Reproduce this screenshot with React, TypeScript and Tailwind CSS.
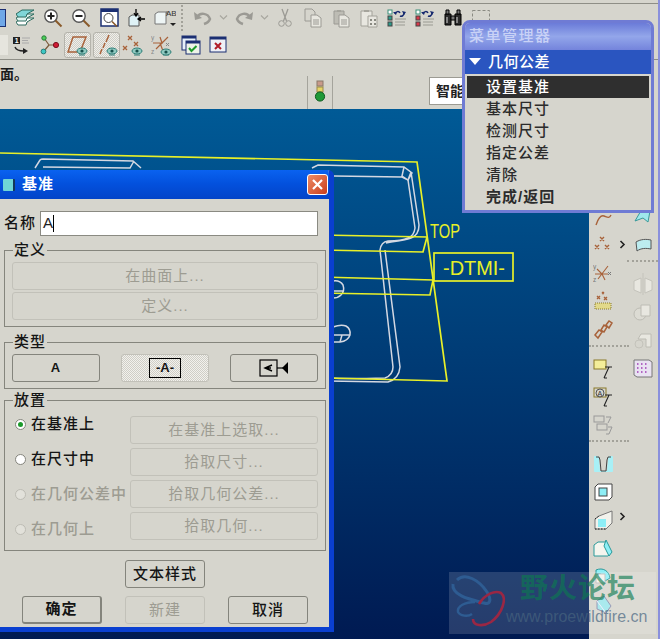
import type { ReactNode } from "react";

const S = ({ children, w = 20, h = 20 }: { children: ReactNode; w?: number; h?: number }) => (
  <svg width={w} height={h} viewBox={`0 0 ${w} ${h}`} fill="none" className="shrink-0">
    {children}
  </svg>
);

const brown = "#a8623a";
const teal = "#2f7f78";

const Eye = ({ x = 12, y = 15 }: { x?: number; y?: number }) => (
  <g>
    <ellipse cx={x} cy={y} rx="5" ry="3" fill="#8fc9c0" stroke={teal} />
    <circle cx={x} cy={y} r="1.6" fill="#15504c" />
    <path d={`M${x - 3} ${y + 4}h6`} stroke={teal} />
  </g>
);

const Layers = () => (
  <S>
    <path d="M1 14l7-4h11l-7 4-1 3H3z" fill="#fff" stroke="#2c6a5e" />
    <path d="M1 10l7-4h11l-7 4-1 3H3z" fill="#dff3ef" stroke="#2c6a5e" />
    <path d="M1 6l6-4h12l-7 4-1 3H3z" fill="#7fd6d8" stroke="#2c6a5e" />
  </S>
);
const Zoom = ({ plus }: { plus?: boolean }) => (
  <S>
    <circle cx="8" cy="8" r="6.2" fill="#fff" stroke="#555" strokeWidth="1.4" />
    <path d="M4.5 8h7" stroke="#222" strokeWidth="2" />
    {plus && <path d="M8 4.5v7" stroke="#222" strokeWidth="2" />}
    <path d="M12.5 12.5l6 6" stroke="#8a5a2a" strokeWidth="2" />
  </S>
);
const ZoomBox = () => (
  <S w={19} h={20}>
    <rect x="1" y="1" width="17" height="17" fill="#fff" stroke="#1b2f72" strokeWidth="1.5" />
    <rect x="1" y="1" width="17" height="3" fill="#1b2f72" />
    <circle cx="8.5" cy="10" r="4.5" stroke="#444" />
    <path d="M12 13.5l5 5" stroke="#8a5a2a" strokeWidth="1.6" />
  </S>
);
const Orient = () => (
  <S>
    <path d="M2 9l3-2h7v11H2z" fill="#dff2f6" stroke="#555" />
    <path d="M9 1v6M7 5l2 3 2-3M18 11h-7M14 9l-3 2 3 2" stroke="#000" strokeWidth="1.3" />
  </S>
);
const NamedView = () => (
  <S w={22} h={20}>
    <path d="M1 6l3-2h8v12H1z" fill="#eef5f5" stroke="#777" />
    <path d="M13 3v3" stroke="#555" />
    <text x="12" y="8" fontSize="8" fill="#333" fontFamily="Liberation Sans">AB</text>
    <path d="M16 15h6l-3 3z" fill="#222" />
  </S>
);
const Undo = ({ flip }: { flip?: boolean }) => (
  <S>
    <g transform={flip ? "matrix(-1 0 0 1 20 0)" : undefined}>
      <path d="M4 9c3-5 11-4 13 2-1 3-3 4-6 5" stroke="#9b9a94" strokeWidth="2.4" />
      <path d="M1 4l1 8 7-2z" fill="#9b9a94" />
    </g>
  </S>
);
const Chev = ({ dark }: { dark?: boolean }) =>
  dark ? (
    <svg width="7" height="9" viewBox="0 0 7 9" fill="none"><path d="M1.5 1l3.5 3.5L1.5 8" stroke="#222" strokeWidth="1.6" /></svg>
  ) : (
    <svg width="9" height="7" viewBox="0 0 9 7" fill="none"><path d="M1 1.5l3.5 3.5L8 1.5" stroke="#a8a79f" strokeWidth="1.2" /></svg>
  );
const Scissors = () => (
  <S w={14} h={20}>
    <path d="M4 1l4.5 12M10 1L5.5 13" stroke="#9b9a94" strokeWidth="1.3" />
    <circle cx="3.5" cy="15.5" r="2.8" stroke="#9b9a94" />
    <circle cx="10.5" cy="15.5" r="2.8" stroke="#9b9a94" />
  </S>
);
const Copy = ({ clip }: { clip?: boolean }) => (
  <S w={18} h={20}>
    {clip ? (
      <path d="M2 3h10v13H2z" fill="#bdbcb4" stroke="#9b9a94" />
    ) : (
      <path d="M1 1h7l3 3v9H1z" fill="#d6d5cd" stroke="#9b9a94" />
    )}
    {clip && <path d="M5 2h4v2H5z" fill="#a5a49c" />}
    <path d="M7 7h6l4 3v9H7z" fill="#e8e7e0" stroke="#9b9a94" />
    <path d="M9 12h6M9 14h6M9 16h6" stroke="#9b9a94" />
  </S>
);
const PasteSpecial = () => (
  <S w={18} h={20}>
    <path d="M1 3h11v15H1z" fill="#e8e7e0" stroke="#a3a29a" />
    <path d="M4 2h5v2H4z" fill="#a5a49c" />
    <path d="M8 8h9v11H8z" fill="#e8e7e0" stroke="#a3a29a" />
    <path d="M10 11h2v2h-2zM14 11h2v2h-2zM10 15h2v2h-2zM14 15h2v2h-2z" fill="#8a8a82" />
  </S>
);
const Regen = ({ red }: { red?: boolean }) => (
  <S>
    <rect x="1" y="2" width="4" height="4" fill="#fff" stroke="#3b8f7a" />
    <rect x="1" y="8" width="4" height="4" fill={red ? "#d8384a" : "#2c9a8a"} stroke="#444" />
    <rect x="1" y="14" width="4" height="4" fill={red ? "#d8384a" : "#2c9a8a"} stroke="#444" />
    <path d="M8 6c1-3 4-3 5-1M17 5c0 2-2 4-4 3" stroke="#15286e" strokeWidth="1.5" />
    <path d="M6 4l3 3 1-3zM15 3l4 1-2 3z" fill="#15286e" />
    <path d="M8 11h11M8 14h10M8 17h10" stroke="#9a9a92" />
  </S>
);
const Binoculars = () => (
  <S>
    <path d="M2 6h6v11H2zM12 6h6v11h-6z" fill="#2b2b2b" stroke="#000" />
    <path d="M3 2h3v4H3zM14 2h3v4h-3zM8 8h4v4H8z" fill="#777" stroke="#000" />
    <path d="M4 9v6M14 9v6" stroke="#ddd" />
  </S>
);
const Dashed = () => (
  <S>
    <rect x="1.5" y="2.5" width="17" height="16" stroke="#8a8a82" strokeDasharray="3 2" />
  </S>
);

const NoteOne = () => (
  <S>
    <rect x="1" y="2" width="7" height="7" fill="#222" />
    <text x="2.8" y="8" fontSize="7" fill="#fff" fontFamily="Liberation Sans" fontWeight="700">1</text>
    <path d="M10 3h8M10 5.5h6M10 8h7" stroke="#aaa" />
    <path d="M3 12c1 3 4 4 9 4" stroke="#222" strokeWidth="1.4" />
    <path d="M11 13l5 3-5 3z" fill="#222" />
  </S>
);
const Nodes = () => (
  <S>
    <path d="M4 3l5 7h7M9 10l-5 6" stroke="#7a5a3a" strokeWidth="1.2" />
    <circle cx="4" cy="3" r="2.2" fill="#4cd05a" stroke="#2a7a3a" />
    <circle cx="16" cy="10" r="2.6" fill="#d01c34" stroke="#7a1020" />
    <circle cx="3.5" cy="16.5" r="2.4" fill="#3cc8c4" stroke="#2a7a78" />
  </S>
);
const PlaneEye = () => (
  <S w={22} h={22}>
    <path d="M6 3h13l-6 15H1z" stroke={brown} strokeWidth="1.5" />
    <Eye x={15} y={17} />
  </S>
);
const AxisEye = () => (
  <S w={22} h={22}>
    <path d="M13 1l-3 7M9 9l-2 5M6 15l-2 5" stroke={brown} strokeWidth="1.5" />
    <Eye x={16} y={17} />
  </S>
);
const PointsEye = () => (
  <S w={22} h={22}>
    <path d="M6 2l4 4M10 2L6 6M12 8l4 4M16 8l-4 4M1 12l4 4M5 12l-4 4" stroke={brown} strokeWidth="1.3" />
    <Eye x={15} y={17} />
  </S>
);
const CsysEye = () => (
  <S w={22} h={22}>
    <path d="M9 3l2 6M17 3L5 15M2 9h10M9 9l3 8" stroke={brown} strokeWidth="1.2" />
    <text x="0" y="6" fontSize="6.5" fill="#888" fontFamily="Liberation Sans">y</text>
    <text x="0" y="20" fontSize="6.5" fill="#888" fontFamily="Liberation Sans">z</text>
    <path d="M15 9l3 3M18 9l-3 3" stroke="#888" />
    <Eye x={15} y={18} />
  </S>
);
const WinCheck = () => (
  <S w={20} h={20}>
    <rect x="1" y="1" width="14" height="14" fill="#e7f0f8" stroke="#1b2f72" />
    <rect x="1" y="1" width="14" height="2.5" fill="#1b2f72" />
    <rect x="5" y="6" width="14" height="13" fill="#eef3e8" stroke="#1b2f72" />
    <rect x="5" y="6" width="14" height="2.5" fill="#1b2f72" />
    <path d="M8 13l2.5 3 5-5" stroke="#1d9a2c" strokeWidth="2" />
  </S>
);
const WinClose = () => (
  <S w={18} h={18}>
    <rect x="1" y="1" width="16" height="15" fill="#eef0f6" stroke="#1b2f72" />
    <rect x="1" y="1" width="16" height="2.5" fill="#1b2f72" />
    <path d="M6 7l6 6M12 7l-6 6" stroke="#b01c28" strokeWidth="2" />
  </S>
);

/* right column */
const CurveTop = () => (
  <S>
    <path d="M3 18c2-6 5-10 8-9s5 3 7-1" stroke={brown} strokeWidth="1.4" />
  </S>
);
const PointSet = () => (
  <S>
    <path d="M7 2l4 4M11 2L7 6M2 10l4 4M6 10l-4 4M12 10l4 4M16 10l-4 4" stroke={brown} strokeWidth="1.4" />
  </S>
);
const Csys = () => (
  <S>
    <path d="M4 6l5 5M15 3L5 16M2 11h13M9 11l3 6" stroke={brown} strokeWidth="1.1" />
    <text x="0" y="6" fontSize="6.5" fill="#777" fontFamily="Liberation Sans">y</text>
    <text x="0" y="19" fontSize="6.5" fill="#777" fontFamily="Liberation Sans">z</text>
    <path d="M15 9l3 3M18 9l-3 3" stroke="#777" />
  </S>
);
const PointHatch = () => (
  <S>
    <path d="M9 1l2 2M11 1L9 3M4 5l3 3M7 5L4 8M11 6l3 3M14 6l-3 3" stroke={brown} strokeWidth="1.3" />
    <rect x="2" y="12" width="16" height="6" fill="#e2d98a" stroke="#8a7a2a" strokeDasharray="1 1" />
  </S>
);
const Chain = () => (
  <S w={21} h={21}>
    <path d="M2 16l4-5 3 2-4 6zM8 11l3-5 3 2-3 5zM13 6l3-4 3 2-3 5z" stroke={brown} strokeWidth="1.5" />
  </S>
);
const NoteBox = ({ sym }: { sym?: boolean }) => (
  <S>
    <rect x="1" y="1" width="12" height="9" fill={sym ? "#d6d5cd" : "#f4ee9a"} stroke="#8a7a2a" />
    {sym && <circle cx="7" cy="6" r="4" stroke="#555" />}
    {sym && <text x="4.6" y="8.6" fontSize="7" fill="#333" fontFamily="Liberation Sans">A</text>}
    <path d="M11 19l5-11h-4M16 8h3M14 19h-3" stroke="#222" strokeWidth="1.1" />
  </S>
);
const NoteGhost = () => (
  <S>
    <rect x="1" y="1" width="10" height="6" stroke="#999" />
    <rect x="4" y="9" width="10" height="6" stroke="#999" />
    <path d="M13 2h5l-3 6M15 12h4l-3 7h-3" stroke="#999" />
  </S>
);
const SurfTop = () => (
  <S>
    <path d="M2 14l7-12 8 2-2 11-5-4z" fill="#9fe8ec" stroke="#3a9a9a" />
  </S>
);
const Surf = () => (
  <S w={18} h={16}>
    <path d="M2 5c5-3 10-3 15-2v9c-5-1-10-1-14 2z" fill="#bcecef" stroke="#555" />
  </S>
);
const Mirror = () => (
  <S w={22} h={22}>
    <path d="M11 0v22" stroke="#c4c3bb" />
    <path d="M9 5L2 8v9l7 3zM13 5l7 3v9l-7 3z" fill="#e8e7e0" stroke="#c4c3bb" />
  </S>
);
const Merge = () => (
  <S>
    <circle cx="7" cy="12" r="6" fill="#dcdbd3" stroke="#bdbcb4" />
    <path d="M8 3h9v11H8z" fill="#e8e7e0" stroke="#bdbcb4" />
  </S>
);
const Trim = () => (
  <S>
    <path d="M8 4h10v13h-5V9H5z" fill="#e8e7e0" stroke="#bdbcb4" />
    <circle cx="6" cy="14" r="4" stroke="#c4c3bb" />
  </S>
);
const Grid = () => (
  <S>
    <path d="M1 2h15l3 2v15H4l-3-2z" fill="#e9e2f2" stroke="#777" />
    <path d="M4 6h1.5M8 6h1.5M12 6h1.5M4 10h1.5M8 10h1.5M12 10h1.5M4 14h1.5M8 14h1.5M12 14h1.5" stroke="#a03cb4" strokeWidth="1.6" />
  </S>
);
const Slot = () => (
  <S w={19} h={18}>
    <rect x="0" y="1" width="19" height="16" rx="1" fill="#a8f0f6" />
    <path d="M4 1l1 3 1 12h7l1-12 1-3z" fill="#d6d5cd" />
    <path d="M2 2h3l1 3 1 11h5l1-11 1-3h3" stroke="#444" />
  </S>
);
const Shell = () => (
  <S w={19} h={18}>
    <path d="M1 4l3-3h14v13l-3 3H1z" fill="#fff" stroke="#444" />
    <rect x="5" y="5" width="8" height="8" fill="#8deef6" stroke="#444" />
  </S>
);
const Rib = () => (
  <S w={22} h={20}>
    <path d="M7 6l13-5v12l-6 6H3V9z" fill="#f2f2ec" stroke="#777" />
    <rect x="6" y="9" width="8" height="8" fill="#8deef6" />
    <path d="M3 9l4-3M3 19h11" stroke="#222" strokeDasharray="1.5 1.5" />
  </S>
);
const Draft = () => (
  <S w={20} h={20}>
    <path d="M1 7l4-3h8l5 11-3 3H1z" fill="#f5f5ee" stroke="#2a9a9a" />
    <path d="M13 2l6 12-3 4-5-10z" fill="#8deef6" stroke="#2a9a9a" />
  </S>
);
const Round = () => (
  <S w={20} h={20}>
    <path d="M3 4c7-3 13 1 14 8l-5 3C11 9 8 7 3 8z" fill="#8deef6" stroke="#2a9a9a" />
    <path d="M3 8h9v9H3z" fill="#f2f2ec" stroke="#bbb" />
  </S>
);
const Chamfer = () => (
  <S w={20} h={20}>
    <path d="M4 7l7-5 7 10-5 7-9-4z" fill="#9ae5ea" stroke="#88a" />
    <path d="M4 7l9 12" stroke="#eef" />
  </S>
);

const Dots = ({ className = "" }: { className?: string }) => (
  <div className={`border-t-2 border-dotted border-[#a3a29a] ${className}`} />
);

const Tool = ({ w = "w-7", children, pressed }: { w?: string; children?: ReactNode; pressed?: boolean }) => (
  <div
    className={`flex h-[26px] shrink-0 items-center justify-center overflow-hidden ${w} ${
      pressed
        ? "rounded-[3px] border border-[#b5b4ac] bg-[repeating-conic-gradient(#cfcec6_0_25%,#efeeea_0_50%)] bg-[length:2px_2px]"
        : ""
    }`}
  >
    {children}
  </div>
);

const Cell = ({ children }: { children?: ReactNode }) => (
  <div className="flex h-7 items-center justify-center">{children}</div>
);

const DialogButton = ({
  children,
  disabled,
  className = "",
  pressed,
}: {
  children: ReactNode;
  disabled?: boolean;
  className?: string;
  pressed?: boolean;
}) => (
  <div
    className={`flex h-7 items-center justify-center rounded-[3px] border text-[15px] tracking-[1px] ${
      disabled ? "border-[#c2c1b9] text-[#9d9c92]" : "border-[#84847c] text-[#151515]"
    } ${
      pressed
        ? "border-[#c2c1b9] bg-[repeating-conic-gradient(#cfcec6_0_25%,#f2f1ed_0_50%)] bg-[length:2px_2px]"
        : ""
    } ${className}`}
  >
    {children}
  </div>
);

const Group = ({ title, className, children }: { title: string; className: string; children: ReactNode }) => (
  <div className={`relative border border-[#85857d] ${className}`}>
    <span className="absolute left-[8px] top-[-11px] bg-[#d6d5cd] px-[1px] text-[15px] font-medium leading-[20px] tracking-[1px] text-[#151515]">
      {title}
    </span>
    {children}
  </div>
);

const placements = [
  { label: "在基准上", button: "在基准上选取...", pad: "pb-[12px]", checked: true },
  { label: "在尺寸中", button: "拾取尺寸...", pad: "pb-[6px]" },
  { label: "在几何公差中", button: "拾取几何公差...", pad: "", disabled: true },
  { label: "在几何上", button: "拾取几何...", pad: "pt-[6px]", disabled: true },
];

const Dialog = () => (
  <div className="absolute left-0 top-[170px] h-[462px] w-[334px] overflow-hidden rounded-tr-md border-b-[5px] border-r-[5px] border-[#0a3fd0] bg-[#d6d5cd]">
    <div className="flex h-[29px] items-center bg-gradient-to-b from-[#0a62f0] via-[#0350dc] to-[#0344c8] pl-[3px] pr-[1px]">
      <span className="h-[12px] w-[12px] rounded-[1px] border-r-2 border-[#13385a] bg-[#6fd6d6]" />
      <span className="ml-[7px] text-[15px] font-bold tracking-[1px] text-white">基准</span>
      <div className="ml-auto flex h-[21px] w-[21px] items-center justify-center rounded-[3px] border border-white bg-gradient-to-br from-[#ec8a64] to-[#c93c18]">
        <svg width="13" height="13" viewBox="0 0 13 13"><path d="M2 2l9 9M11 2l-9 9" stroke="#fff" strokeWidth="2.2" /></svg>
      </div>
    </div>
    <div className="pl-1 pr-[3px]">
      <div className="mt-[12px] flex h-[25px] items-center">
        <span className="w-[36px] text-[15px] font-medium tracking-[1px] text-[#151515]">名称</span>
        <div className="flex h-[25px] w-[278px] items-center border border-[#8a8a82] bg-white pl-[2px] font-['Liberation_Sans',sans-serif] text-[15px] text-[#222]">
          A<span className="h-[17px] w-[1px] bg-black" />
        </div>
      </div>

      <Group title="定义" className="mt-[14px] flex flex-col gap-[2px] px-[7px] pb-[6px] pt-[11px]">
        <DialogButton disabled>在曲面上...</DialogButton>
        <DialogButton disabled>定义...</DialogButton>
      </Group>

      <Group title="类型" className="mt-[15px] flex justify-between px-[7px] pb-[6px] pt-[11px]">
        <DialogButton className="w-[88px]">
          <span className="font-['Liberation_Sans',sans-serif] text-[13px] font-bold">A</span>
        </DialogButton>
        <DialogButton pressed className="w-[88px]">
          <span className="flex h-[20px] w-[32px] items-center justify-center border border-black font-['Liberation_Sans',sans-serif] text-[13px] font-bold tracking-[0px]">
            -A-
          </span>
        </DialogButton>
        <DialogButton className="w-[88px]">
          <svg width="30" height="18" viewBox="0 0 30 18" fill="none">
            <rect x="1" y="1" width="17" height="16" stroke="#000" strokeWidth="1.2" />
            <path d="M13 6L6 9l7 3M6 9h6" stroke="#000" strokeWidth="1.4" />
            <path d="M18 9h6" stroke="#000" strokeWidth="1.2" />
            <path d="M29 3v12l-6-6z" fill="#000" />
          </svg>
        </DialogButton>
      </Group>

      <Group title="放置" className="mt-[11px] flex flex-col gap-1 px-[7px] pb-[10px] pt-[15px]">
        {placements.map((p) => (
          <div key={p.label} className="flex">
            <div
              className={`flex h-7 w-[118px] items-center gap-[5px] pl-[3px] text-[15px] font-medium tracking-[1px] ${p.pad} ${
                p.disabled ? "text-[#9d9c92]" : "text-[#151515]"
              }`}
            >
              <span
                className={`flex h-[11px] w-[11px] shrink-0 items-center justify-center rounded-full border ${
                  p.disabled ? "border-[#bdbcb4] bg-[#e2e1da]" : "border-[#85857d] bg-white"
                }`}
              >
                {p.checked && <span className="h-[5px] w-[5px] rounded-full bg-[#1c9a2c]" />}
              </span>
              <span className="whitespace-nowrap">{p.label}</span>
            </div>
            <DialogButton disabled className="w-[188px]">
              {p.button}
            </DialogButton>
          </div>
        ))}
      </Group>

      <div className="mt-[9px] flex justify-center">
        <DialogButton className="w-[80px] font-medium">文本样式</DialogButton>
      </div>
      <div className="mt-[8px] flex gap-[23px] pl-[18px]">
        <DialogButton className="w-[80px] border-b-2 border-r-2 font-bold">确定</DialogButton>
        <DialogButton disabled className="w-[80px]">新建</DialogButton>
        <DialogButton className="w-[80px] font-medium">取消</DialogButton>
      </div>
    </div>
  </div>
);

const menuItems = ["基本尺寸", "检测尺寸", "指定公差", "清除", "完成/返回"];

const MenuManager = () => (
  <div className="absolute left-[462px] top-[20px] w-[192px] overflow-hidden rounded-t-lg border-[3px] border-[#6f7bd4] bg-[#d6d5cd]">
    <div className="flex h-[27px] items-center bg-gradient-to-b from-[#6b7bd8] via-[#93a6ea] to-[#7484dc] pl-[4px] text-[15px] font-medium tracking-[1.5px] text-[#c9d2f6]">
      菜单管理器
    </div>
    <div className="flex h-[24px] items-center gap-[7px] bg-[#2a55c0] pl-[4px] text-[15px] font-medium tracking-[0.5px] text-white">
      <svg width="12" height="8" viewBox="0 0 12 8"><path d="M0 0h12L6 7z" fill="#fff" /></svg>
      几何公差
    </div>
    <div className="p-[2px] text-[15px] font-medium tracking-[1px] text-[#2c2c2c]">
      <div className="flex h-[22px] items-center bg-[#2f2f2f] pl-[19px] text-white">设置基准</div>
      {menuItems.map((m) => (
        <div key={m} className={`flex h-[22px] items-center pl-[19px] ${m === "完成/返回" ? "font-bold" : ""}`}>
          {m}
        </div>
      ))}
    </div>
  </div>
);

const Model = () => (
  <svg className="absolute inset-0 h-full w-full" viewBox="0 109 589 530" fill="none">
    <g stroke="#d4d8e2" strokeWidth="1.5">
      <path d="M35 168l5-8q1-1 3-1l90 2 8 7M43 167l87 1 4-7" />
      <path d="M312 168l6-3 86 2 8 6-4 7-6-3-68-1M404 167l-2 9 6 4 3-8" />
      <path d="M411 172l8 53q0 10-8 13-5 2-20 4l-5 1M408 180l7 48q-1 8-7 10-6 3-20 3-7 1-8 9" />
      <path d="M380 250l13 117q0 8-8 11-40 1-55 0M385 250l15 117q-1 12-12 15l-60-1" />
      <path d="M333 281q7-1 10 4 2 6-2 10-3 3-8 3M333 291h11M333 327q8-3 13-1 5 3 4 9-2 6-10 7h-7M333 335h17M342 335l-2 7" />
    </g>
    <g stroke="#e8f028" strokeWidth="1.7">
      <path d="M0 153l417 9 30 219-120-3" />
      <path d="M320 235l107 2-4 15-103-2M320 277l113 3-3 15-110-2" />
      <rect x="434" y="253" width="79" height="28" />
    </g>
    <text x="430" y="238" fill="#e8f028" fontSize="21" fontFamily="Liberation Sans" textLength="30" lengthAdjust="spacingAndGlyphs">
      TOP
    </text>
    <text x="443" y="275" fill="#e8f028" fontSize="20" fontFamily="Liberation Sans" textLength="62" lengthAdjust="spacingAndGlyphs">
      -DTMI-
    </text>
  </svg>
);

const Watermark = () => (
  <div className="absolute left-[449px] top-[572px] flex h-[62px] w-[207px] bg-white/15">
    <svg width="60" height="58" viewBox="0 0 60 58" fill="none" className="shrink-0">
      <path d="M8 8c8-8 22 0 30 12 5 8 3 13-3 11C24 28 2 24 4 12" stroke="#2e5c92" strokeWidth="3" />
      <path d="M30 32c6-10 16-14 22-11 6 5 2 20-10 29-8 5-18 4-18-3" stroke="#9a2744" strokeWidth="2.6" />
      <path d="M26 30c-10 0-18 4-17 10 2 4 10 5 14 2" stroke="#2e5c92" strokeWidth="2.4" />
    </svg>
    <div className="ml-[11px] flex flex-col">
      <span className="h-[32px] text-[28px] font-bold leading-[34px] tracking-[1px] text-[#0c7a50]/65">野火论坛</span>
      <span className="ml-[-14px] whitespace-nowrap font-['Liberation_Sans',sans-serif] text-[16px] leading-[26px] text-[#46647f]/70">
        www.proewildfire.cn
      </span>
    </div>
  </div>
);

export default function App() {
  return (
    <div className="relative flex h-[639px] w-[660px] flex-col overflow-hidden border-r-2 border-[#8a90dc] bg-[#d6d5cd] font-['Liberation_Sans','Noto_Sans_CJK_SC',sans-serif]">
      <div className="h-[60px] shrink-0 border-b border-[#8e8e86]">
        <div className="mt-[3px] flex h-[28px] items-center border-t border-[#8e8e86]">
          <Tool w="w-[16px]">
            <div className="mr-[10px] h-[18px] w-[6px] border-y border-r border-[#1b2f72] bg-[#6fa8e8]" />
          </Tool>
          <Tool w="w-[18px]"><Layers /></Tool>
          <div className="w-[5px]" />
          <Tool><Zoom plus /></Tool>
          <Tool><Zoom /></Tool>
          <Tool><ZoomBox /></Tool>
          <Tool><Orient /></Tool>
          <Tool><NamedView /></Tool>
          <div className="ml-[2px] h-[26px] border-l-2 border-dotted border-[#a3a29a]" />
          <div className="w-[6px]" />
          <Tool><Undo /></Tool>
          <Tool w="w-[13px]"><Chev /></Tool>
          <Tool><Undo flip /></Tool>
          <Tool w="w-[13px]"><Chev /></Tool>
          <Tool><Scissors /></Tool>
          <Tool><Copy /></Tool>
          <Tool><Copy clip /></Tool>
          <Tool><PasteSpecial /></Tool>
          <Tool><Regen /></Tool>
          <Tool><Regen red /></Tool>
          <Tool><Binoculars /></Tool>
          <Tool><Dashed /></Tool>
        </div>
        <div className="flex h-[28px] items-center">
          <Tool w="w-[8px]">
            <div className="h-[20px] w-[8px] bg-[#e6e5de]" />
          </Tool>
          <Tool><NoteOne /></Tool>
          <Tool><Nodes /></Tool>
          <Tool pressed w="w-[27px]"><PlaneEye /></Tool>
          <div className="w-[2px]" />
          <Tool pressed w="w-[27px]"><AxisEye /></Tool>
          <Tool w="w-[26px]"><PointsEye /></Tool>
          <Tool w="w-[32px]"><CsysEye /></Tool>
          <Tool w="w-[26px]"><WinCheck /></Tool>
          <Tool w="w-[28px]"><WinClose /></Tool>
        </div>
      </div>

      <div className="flex h-[49px] shrink-0 items-start">
        <div className="w-[307px] pt-[4px] text-[14px] font-bold leading-[20px] text-[#1c1c1c]">面。</div>
        <div className="mt-[16px] flex h-[33px] w-[26px] items-start justify-center border-x border-[#a5a49c] pt-[4px]">
          <svg width="12" height="22" viewBox="0 0 12 22" fill="none">
            <rect x="3" y="1" width="6" height="5" fill="#c99a8a" stroke="#8a7a6a" />
            <rect x="3" y="7" width="6" height="5" fill="#e6d468" stroke="#9a8a4a" />
            <circle cx="6" cy="16.5" r="4.6" fill="#1f9a38" stroke="#0c5a1e" />
          </svg>
        </div>
        <div className="ml-[96px] mt-[17px] flex h-[28px] w-[100px] items-center border border-[#9c9b93] bg-white pl-[6px] text-[14px] font-bold text-[#222]">
          智能
        </div>
      </div>

      <div className="flex min-h-0 flex-1">
        <div className="relative w-[589px] shrink-0 bg-gradient-to-b from-[#005a96] to-[#001a52]">
          <Model />
        </div>
        <div className="flex w-[69px] shrink-0 pt-[94px]">
          <div className="w-[28px] shrink-0">
            <Cell><CurveTop /></Cell>
            <Cell><PointSet /></Cell>
            <Cell><Csys /></Cell>
            <Cell><PointHatch /></Cell>
            <Cell><Chain /></Cell>
            <Dots className="mt-[2px] w-[40px]" />
            <div className="h-2" />
            <Cell><NoteBox /></Cell>
            <Cell><NoteBox sym /></Cell>
            <Cell><NoteGhost /></Cell>
            <Dots className="mt-[1px] w-[40px]" />
            <div className="h-2" />
            <Cell><Slot /></Cell>
            <Cell><Shell /></Cell>
            <Cell><Rib /></Cell>
            <Cell><Draft /></Cell>
            <Cell><Round /></Cell>
            <Cell><Chamfer /></Cell>
          </div>
          <div className="flex w-[10px] shrink-0 flex-col items-center">
            <div className="mt-[27px] flex h-7 items-center"><Chev dark /></div>
            <div className="mt-[244px] flex h-7 items-center"><Chev dark /></div>
          </div>
          <div className="w-[31px] shrink-0">
            <Cell><SurfTop /></Cell>
            <Cell><Surf /></Cell>
            <Dots className="mt-[1px]" />
            <div className="h-2" />
            <Cell><Mirror /></Cell>
            <Cell><Merge /></Cell>
            <Cell><Trim /></Cell>
            <Cell><Grid /></Cell>
          </div>
        </div>
      </div>

      <Dialog />
      <MenuManager />
      <Watermark />
    </div>
  );
}
